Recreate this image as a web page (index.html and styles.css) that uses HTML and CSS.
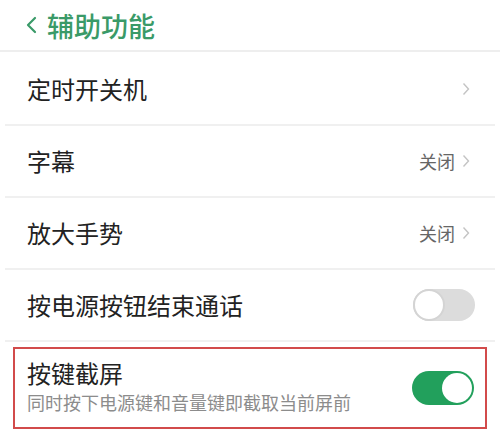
FILE: index.html
```html
<!DOCTYPE html>
<html lang="zh-CN">
<head>
    <meta charset="UTF-8">
    <meta name="viewport" content="width=device-width, initial-scale=1.0">
    <title>辅助功能</title>
    <link rel="stylesheet" href="styles.css">
</head>
<body>
    <div class="header">
        <svg class="back" width="12" height="18" viewBox="0 0 12 18">
            <polyline points="10,2 3,9 10,16" fill="none" stroke="#3a9a68" stroke-width="2.2" stroke-linecap="round" stroke-linejoin="round"/>
        </svg>
        <h1>辅助功能</h1>
    </div>

    <div class="list">
        <div class="row">
            <span class="label">定时开关机</span>
            <span class="right">
                <svg class="arrow" width="8" height="14" viewBox="0 0 8 14"><polyline points="1.5,1.5 6.5,7 1.5,12.5" fill="none" stroke="#c4c4c4" stroke-width="1.4"/></svg>
            </span>
        </div>
        <div class="row">
            <span class="label">字幕</span>
            <span class="right">
                <span class="value">关闭</span>
                <svg class="arrow" width="8" height="14" viewBox="0 0 8 14"><polyline points="1.5,1.5 6.5,7 1.5,12.5" fill="none" stroke="#c4c4c4" stroke-width="1.4"/></svg>
            </span>
        </div>
        <div class="row">
            <span class="label">放大手势</span>
            <span class="right">
                <span class="value">关闭</span>
                <svg class="arrow" width="8" height="14" viewBox="0 0 8 14"><polyline points="1.5,1.5 6.5,7 1.5,12.5" fill="none" stroke="#c4c4c4" stroke-width="1.4"/></svg>
            </span>
        </div>
        <div class="row">
            <span class="label">按电源按钮结束通话</span>
            <span class="switch"><span class="knob"></span></span>
        </div>

        <div class="highlight">
            <div class="text">
                <div class="label">按键截屏</div>
                <div class="desc">同时按下电源键和音量键即截取当前屏前</div>
            </div>
            <span class="switch on"><span class="knob"></span></span>
        </div>
    </div>
</body>
</html>
```

FILE: styles.css
```css
body {
    margin: 0;
    padding: 0;
    background-color: #fff;
    font-family: "Noto Sans CJK SC", "Noto Sans", sans-serif;
    color: #222;
}
.header {
    height: 50px;
    display: flex;
    align-items: center;
    padding-left: 25px;
    border-bottom: 2px solid #eeeeee;
}
.header h1 {
    margin: 0 0 0 10px;
    font-size: 27px;
    font-weight: 500;
    color: #3a9a68;
    line-height: 1;
}
.list {
    margin: 0 5px;
}
.row {
    height: 70px;
    display: flex;
    align-items: center;
    justify-content: space-between;
    padding: 0 20px 0 22px;
    border-bottom: 2px solid #f0f0f0;
}
.row:first-child {
    padding-top: 2px;
}
.label {
    font-size: 24px;
    line-height: 1;
    color: #222;
}
.right {
    display: flex;
    align-items: center;
    padding-right: 5px;
}
.value {
    font-size: 18px;
    color: #666;
    margin-right: 7px;
}
.switch {
    width: 62px;
    height: 32px;
    border-radius: 16px;
    background-color: #dcdcdc;
    display: flex;
    align-items: center;
    box-sizing: border-box;
}
.switch .knob {
    width: 32px;
    height: 32px;
    border-radius: 50%;
    background-color: #fff;
    box-sizing: border-box;
    border: 2px solid #d4d4d4;
}
.switch.on {
    width: 62px;
    height: 34px;
    border-radius: 17px;
    background-color: #22a05c;
    justify-content: flex-end;
    padding-right: 2px;
}
.switch.on .knob {
    width: 30px;
    height: 30px;
    border: none;
}
.highlight {
    margin: 5px 8px 0 8px;
    height: 78px;
    border: 2px solid #d24b4b;
    display: flex;
    align-items: center;
    justify-content: space-between;
    padding: 0 11px 0 12px;
}
.highlight .text {
    display: flex;
    flex-direction: column;
    gap: 8px;
    margin-top: -4px;
}
.desc {
    font-size: 18px;
    color: #8c8c8c;
    line-height: 1;
}
```
